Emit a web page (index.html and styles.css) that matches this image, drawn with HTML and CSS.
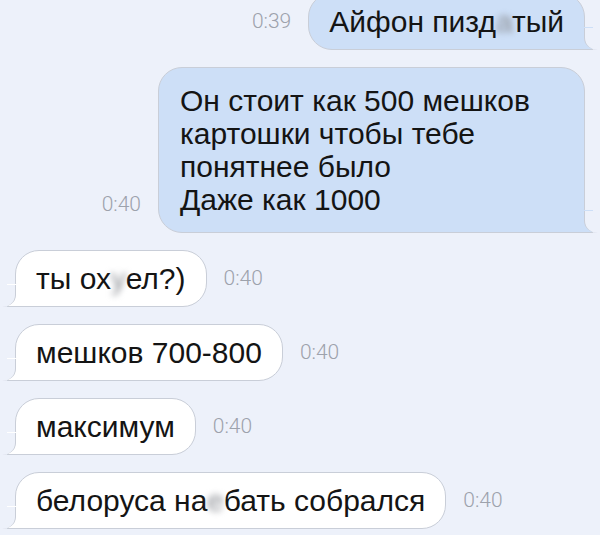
FILE: index.html
```html
<!DOCTYPE html>
<html lang="ru">
<head>
    <meta charset="UTF-8">
    <meta name="viewport" content="width=device-width, initial-scale=1.0">
    <title>Сообщения</title>
    <link rel="stylesheet" href="styles.css">
</head>
<body>

    <div id="chat">

        <div class="row out">
            <span class="time">0:39</span>
            <div class="bubble">Айфон пизд<span class="blur">а</span>тый</div>
        </div>

        <div class="row out">
            <span class="time">0:40</span>
            <div class="bubble wide">Он стоит как 500 мешков картошки чтобы тебе понятнее было<br>Даже как 1000</div>
        </div>

        <div class="row in">
            <div class="bubble">ты ох<span class="blur">у</span>ел?)</div>
            <span class="time">0:40</span>
        </div>

        <div class="row in">
            <div class="bubble">мешков 700-800</div>
            <span class="time">0:40</span>
        </div>

        <div class="row in">
            <div class="bubble">максимум</div>
            <span class="time">0:40</span>
        </div>

        <div class="row in">
            <div class="bubble">белоруса на<span class="blur">е</span>бать собрался</div>
            <span class="time">0:40</span>
        </div>

    </div>

</body>
</html>
```

FILE: styles.css
```css
body {
    font-family: "Liberation Sans", Arial, sans-serif;
    background-color: #edf1fa;
    color: #141414;
    margin: 0;
    padding: 0;
    overflow: hidden;
}
#chat {
    display: flex;
    flex-direction: column;
    gap: 17px;
    padding: 0 15px;
    margin-top: -7px;
}
.row {
    display: flex;
    align-items: flex-end;
    gap: 17px;
}
.row.out {
    justify-content: flex-end;
}
.time {
    font-family: Roboto, "Liberation Sans", sans-serif;
    font-weight: 300;
    font-size: 21px;
    color: #9da2ac;
    margin-bottom: 17px;
}
.bubble {
    position: relative;
    z-index: 0;
    font-size: 30px;
    line-height: 33px;
    padding: 11px 20px;
    border-radius: 24px;
    border: 1px solid #c9ced8;
}
.out .bubble {
    background: #cddff7;
}
.in .bubble {
    background: #ffffff;
}
.bubble.wide {
    max-width: 383px;
    padding: 16px 21px;
}

/* bubble tails, drawn under the text */
.bubble::before,
.bubble::after {
    content: "";
    position: absolute;
    z-index: -1;
    bottom: -1px;
    height: 22px;
}
.bubble::before {
    width: 33px;
    border-bottom: 1px solid #c9ced8;
}
.bubble::after {
    width: 26px;
    background: #edf1fa;
}
.in .bubble::before {
    left: -9px;
    background: #ffffff;
}
.in .bubble::after {
    left: -27px;
    border-right: 1px solid #c9ced8;
    border-bottom-right-radius: 14px 12px;
}
.out .bubble::before {
    right: -9px;
    background: #cddff7;
}
.out .bubble::after {
    right: -27px;
    border-left: 1px solid #c9ced8;
    border-bottom-left-radius: 14px 12px;
}
.blur {
    filter: blur(3px);
    color: #8a8d93;
}
```
